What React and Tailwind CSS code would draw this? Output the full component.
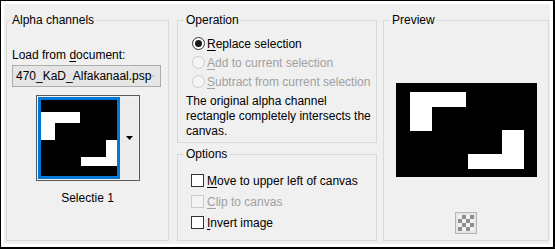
import React from 'react';

const font = { fontFamily: '"Segoe UI", "Liberation Sans", Arial, sans-serif' };

// radio button, windows style
const Radio = ({ checked, disabled, children }) => (
  <div className="flex items-center h-[19px] pl-[14px]">
    <span
      className={
        disabled
          ? 'w-[13px] h-[13px] rounded-full border border-[#cccccc] bg-[#f5f5f5] flex items-center justify-center shrink-0'
          : 'w-[13px] h-[13px] rounded-full border border-[#333333] bg-white flex items-center justify-center shrink-0'
      }
    >
      {checked && <span className="w-[7px] h-[7px] rounded-full bg-[#1a1a1a]" />}
    </span>
    <span className={disabled ? 'ml-[2px] text-[#a0a0a0] whitespace-nowrap' : 'ml-[2px] text-black whitespace-nowrap'}>{children}</span>
  </div>
);

const Check = ({ disabled, children }) => (
  <div className="flex items-center h-[21px] pl-[13px]">
    <span
      className={
        disabled
          ? 'w-[13px] h-[13px] border border-[#cccccc] bg-[#f3f3f3] shrink-0'
          : 'w-[13px] h-[13px] border border-[#333333] bg-white shrink-0'
      }
    />
    <span className={disabled ? 'ml-[3px] text-[#a0a0a0] whitespace-nowrap' : 'ml-[3px] text-black whitespace-nowrap'}>{children}</span>
  </div>
);

const Key = ({ children }) => <u className="underline decoration-1 underline-offset-2">{children}</u>;

const cells = [];
for (let r = 0; r < 4; r++) {
  for (let c = 0; c < 4; c++) {
    if ((r + c) % 2 === 1) cells.push([c, r]);
  }
}

export default function App() {
  return (
    <div
      className="w-[555px] h-[249px] border-t border-l border-r-2 border-b-2 border-black bg-white p-[3px] text-[12px] leading-[16px] text-black"
      style={font}
    >
      <div className="w-full h-full bg-[#f0f0f0] pt-[8px] pl-[2px] flex gap-[8px]">
        {/* Alpha channels */}
        <fieldset className="w-[163px] h-[229px] border border-[#d9d9d9] p-0 m-0">
          <legend className="ml-[3px] px-[2px] leading-[16px]">Alpha channels</legend>
          <div className="mt-[19px] pl-[5px] whitespace-nowrap">
            Load from <Key>d</Key>ocument:
          </div>
          <div className="mt-[2px] ml-[5px] w-[149px] h-[22px] border border-[#adadad] bg-[#e5e5e5] flex items-center justify-between pl-[3px] pr-[5px]">
            <span className="whitespace-nowrap">470_KaD_Alfakanaal.psp</span>
            <svg width="9" height="6" viewBox="0 0 9 6">
              <polyline points="0.5,0.5 4.5,4.5 8.5,0.5" fill="none" stroke="#606060" strokeWidth="1" />
            </svg>
          </div>
          <div className="mt-[8px] ml-[29px] w-[104px] h-[86px] border border-[#5a5a5a] p-px flex">
            <div className="w-[82px] h-[82px] border-[3px] border-[#0078d7] bg-black">
              <svg width="76" height="76" viewBox="0 0 76 76" className="block">
                <rect width="76" height="76" fill="#000" />
                <rect x="0" y="12" width="39" height="11" fill="#fff" />
                <rect x="0" y="23" width="14" height="17" fill="#fff" />
                <rect x="65" y="40" width="11" height="26" fill="#fff" />
                <rect x="40" y="57" width="36" height="9" fill="#fff" />
              </svg>
            </div>
            <div className="flex-1 bg-[#ececec] flex items-center justify-center">
              <svg width="7" height="4" viewBox="0 0 7 4">
                <polygon points="0,0 7,0 3.5,4" fill="#000" />
              </svg>
            </div>
          </div>
          <div className="mt-[9px] text-center">Selectie 1</div>
        </fieldset>

        {/* Operation + Options */}
        <div className="w-[200px] flex flex-col gap-[3px]">
          <fieldset className="w-[200px] h-[131px] border border-[#d9d9d9] p-0 m-0">
            <legend className="ml-[6px] px-[2px] leading-[16px]">Operation</legend>
            <div className="mt-[6px]">
              <Radio checked>
                <Key>R</Key>eplace selection
              </Radio>
              <Radio disabled>
                <Key>A</Key>dd to current selection
              </Radio>
              <Radio disabled>
                <Key>S</Key>ubtract from current selection
              </Radio>
            </div>
            <p className="mt-[3px] pl-[8px] leading-[15px] whitespace-nowrap">
              The original alpha channel
              <br />
              rectangle completely intersects the
              <br />
              canvas.
            </p>
          </fieldset>
          <fieldset className="w-[200px] h-[95px] border border-[#d9d9d9] p-0 m-0">
            <legend className="ml-[6px] px-[2px] leading-[16px]">Options</legend>
            <div className="mt-[8px]">
              <Check>
                <Key>M</Key>ove to upper left of canvas
              </Check>
              <Check disabled>
                <Key>C</Key>lip to canvas
              </Check>
              <Check>
                <Key>I</Key>nvert image
              </Check>
            </div>
          </fieldset>
        </div>

        {/* Preview */}
        <fieldset className="w-[166px] h-[229px] border border-[#d9d9d9] p-0 m-0 -ml-[2px]">
          <legend className="ml-[6px] px-[2px] leading-[16px]">Preview</legend>
          <div className="mt-[55px] flex justify-center">
            <svg width="141" height="94" viewBox="0 0 141 94" className="block">
              <rect width="141" height="94" fill="#000" />
              <rect x="14" y="9" width="56" height="15" fill="#fff" />
              <rect x="14" y="24" width="22" height="24" fill="#fff" />
              <rect x="106" y="47" width="22" height="39" fill="#fff" />
              <rect x="72" y="71" width="56" height="15" fill="#fff" />
            </svg>
          </div>
          <div className="mt-[35px] flex justify-center">
            <div className="w-[22px] h-[22px] border border-[#b4b4b4] bg-[#e6e6e6] flex items-center justify-center">
              <svg width="16" height="16" viewBox="0 0 16 16" className="block">
                <rect width="16" height="16" fill="#f2f2f2" />
                {cells.map(([c, r]) => (
                  <rect key={`${c}-${r}`} x={c * 4} y={r * 4} width="4" height="4" fill="#8f8f8f" />
                ))}
              </svg>
            </div>
          </div>
        </fieldset>
      </div>
    </div>
  );
}
